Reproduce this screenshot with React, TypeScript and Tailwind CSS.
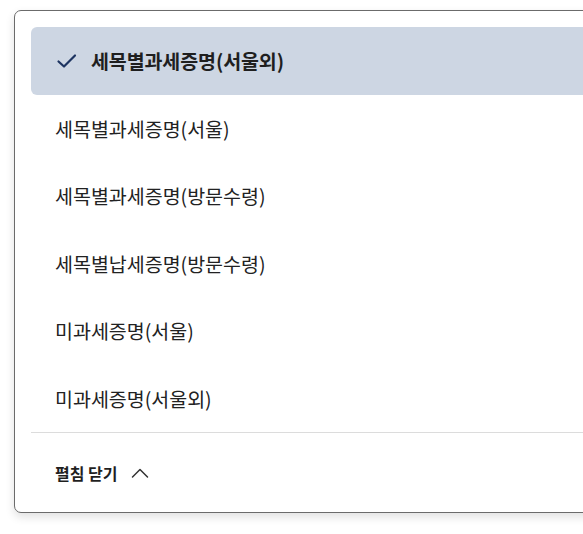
import React from "react";

const items = [
  "세목별과세증명(서울외)",
  "세목별과세증명(서울)",
  "세목별과세증명(방문수령)",
  "세목별납세증명(방문수령)",
  "미과세증명(서울)",
  "미과세증명(서울외)",
];

export default function App() {
  return (
    <div
      className="w-[583px] h-[534px] overflow-hidden bg-white"
      style={{ fontFamily: '"Noto Sans CJK KR", "Noto Sans", sans-serif' }}
    >
      <div className="ml-[14px] mt-[10px] w-[620px] rounded-[7px] border border-[#6b6b6b] bg-white shadow-[0_4px_10px_rgba(0,0,0,0.12)]">
        <div className="px-4 pt-4">
          {items.map((t, i) =>
            i === 0 ? (
              <div
                key={t}
                className="flex h-[67.5px] items-center rounded-[6px] bg-[#cdd6e3] pl-6"
              >
                <svg width="24" height="24" viewBox="0 0 24 24" className="mr-3">
                  <path
                    d="M3.5 12.5 L9 17.5 L20 6.5"
                    fill="none"
                    stroke="#1d3461"
                    strokeWidth="2.2"
                    strokeLinecap="round"
                    strokeLinejoin="round"
                  />
                </svg>
                <span className="text-[19.5px] font-bold tracking-[-0.1px] text-[#1f1f1f]">{t}</span>
              </div>
            ) : (
              <div key={t} className="flex h-[67.5px] items-center pl-6">
                <span className="text-[19.5px] text-[#222]">{t}</span>
              </div>
            )
          )}
          <div className="h-px bg-[#dcdcdc]" />
        </div>
        <div className="flex h-[79px] items-center pl-10">
          <span className="text-[16px] font-bold text-[#1f1f1f]">펼침 닫기</span>
          <svg width="18" height="18" viewBox="0 0 18 18" className="ml-[13px]">
            <path
              d="M1.5 13 L9 5.5 L16.5 13"
              fill="none"
              stroke="#333"
              strokeWidth="1.5"
              strokeLinecap="round"
              strokeLinejoin="round"
            />
          </svg>
        </div>
      </div>
    </div>
  );
}
